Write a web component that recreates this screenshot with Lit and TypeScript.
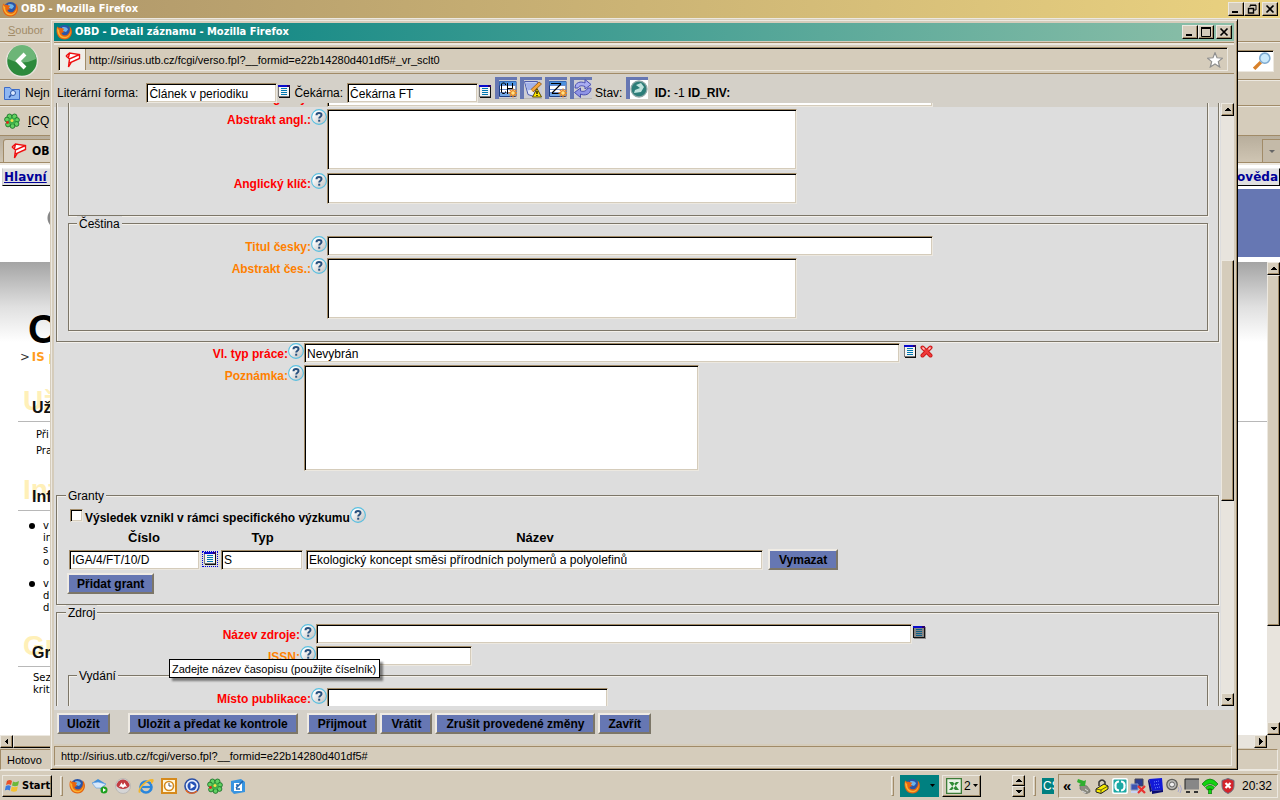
import { LitElement, html, css, svg, nothing } from "lit";
import { customElement } from "lit/decorators.js";

const firefox = svg`
  <circle cx="8.5" cy="8" r="7" fill="#2a55a8"/>
  <path d="M6 3.5C8 2.5 11 3 12 5.5L10 8 7 7Z" fill="#6db3ea"/>
  <path d="M1.2 2.5C0 6 .3 10 2.5 12.8 6 17 13 16.300 15.300 11 16.500 8 16 4.500 13.500 2.300 14.300 5 14 8.500 11.500 10.500 9 12.300 6 11 5.500 9L8.300 8 7 6.800C7 5.800 8 5.600 8.200 4.800 6.500 4.800 5.500 4 4.500 3.800 3.500 3.800 2.300 3.800 1.200 2.500Z" fill="#e8650f"/>
  <path d="M1.200 2.500C1 5 2.300 5 3.200 6 3 9 4.500 12.500 8.500 12.800 12 13 14.500 10 14.500 6 15.500 11 12 14.500 8 14.300 4 14 .5 10 1.200 2.500Z" fill="#f9b233"/>`;
const verso = svg`
  <path d="M3.500 2 7.500.8 14.500 3.500 14 7 6.500 10.500 3 15.500 3.800 10.500Z" fill="#fff"/>
  <path d="M1 4 4.500 1 14.500 2.500 14.500 6.500 6.500 10 3.500 15 4 10.500M4.500 1 3.500 5.500M1 4 4.500 7 14.500 2.500M4.500 7 4 10.500H6.500" fill="none" stroke="#ee1010" stroke-width="1.400"/>`;
const clover = svg`
  <g fill="#62d162" stroke="#0f6b20" stroke-width=".8"><circle cx="5.500" cy="3.500" r="2.500"/><circle cx="10.500" cy="3.500" r="2.500"/><circle cx="13" cy="7" r="2.400"/><circle cx="12.500" cy="11" r="2.400"/><circle cx="8.500" cy="13" r="2.400"/><circle cx="4" cy="11.500" r="2.400"/><circle cx="3" cy="6.500" r="2.400"/></g>
  <circle cx="8" cy="8" r="3.600" fill="#3fae49"/><circle cx="8" cy="7.500" r="1.500" fill="#f6e04a"/><circle cx="3.500" cy="9.500" r="1.400" fill="#e02a1a"/>`;
const list = svg`
  <path d="M0 0H12V13H1V12H0Z" fill="#111"/><path d="M0 2H11V12H0Z" fill="#777"/><path d="M1 2H11V11H1Z" fill="#f4f4f4"/>
  <path d="M0 0H12V2H0Z" fill="#0a0acc"/><path d="M9 0H12V2H9Z" fill="#2a006a"/>
  <path d="M3 3.500H9M3 5.500H9M3 7.500H9M3 9.500H9" stroke="#0078b0"/>`;
const listDark = svg`
  <path d="M1 1H13V13H1Z" fill="#909090"/><path d="M0 0H12V12H0Z" fill="#111"/><path d="M1 2H11V11H1Z" fill="#858585"/>
  <path d="M0 0H12V2H0Z" fill="#0a0acc"/><path d="M9 0H12V2H9Z" fill="#2a006a"/>
  <path d="M3 3.500H9M3 5.500H9M3 7.500H9M3 9.500H9" stroke="#0a5f88"/>`;
const help = svg`
  <defs><linearGradient id="ball" x1="0" y1="0" x2="1" y2="1"><stop offset=".2" stop-color="#fff"/><stop offset="1" stop-color="#bcbcbc"/></linearGradient></defs>
  <circle cx="8" cy="8" r="7.400" fill="url(#ball)" stroke="#58bfe0" stroke-width="1.100"/>
  <path d="M5.500 6.200C5.500 3.200 10.500 3.200 10.500 6 10.500 7.800 8.200 7.600 8.200 9.600" fill="none" stroke="#27507e" stroke-width="2"/><rect x="7.200" y="10.700" width="2" height="2" fill="#27507e"/>`;
const sun = svg`<path d="M18 11.500V20.500M13.500 16H22.500M14.800 12.800 21.200 19.200M21.200 12.800 14.800 19.200" stroke="#f08a20" stroke-width="1.300"/><circle cx="18" cy="16" r="2.300" fill="#ffe08a" stroke="#e88010"/>`;
const gridBase = svg`<path d="M4.500 4.500H21V19.500H4.500Z" fill="#fff" stroke="#1c3f86"/><path d="M4.500 4.500H21V8.500H4.500Z" fill="#4d92e0"/><path d="M5 15.500H21V19H5Z" fill="#76a9e6"/><path d="M5 8.500H21M5 12.500H21M5 15.500H21" stroke="#6c8ccc"/>`;

const tools = {
  ch: svg`${gridBase}<path d="M10.500 8V7L9.500 6H7.500L6.500 7V15L7.500 16.500H9.500L10.500 15.500V14.500M12.500 6V17M17.500 6V12M12.500 11.500H17.500" stroke="#000" fill="none"/>${sun}`,
  edit: svg`<path d="M4.500 4.500H17.500L14 19.500 8 17.500Z" fill="#dfe6fb" stroke="#4c5bac"/><path d="M5.500 5.500H17L15 12 7.500 13.500Z" fill="#a3b2ea"/><path d="M6 6 9 17 8 13Z" fill="#fff"/><path d="M11 12.500 19 5 21.500 7 13 15Z" fill="#f5a53a" stroke="#8f5310" stroke-width=".8"/><path d="M11 12.500 10 15.500 13 15Z" fill="#fff0c0"/><path d="M17 11.500 21.500 20H12.500Z" fill="#ffe800" stroke="#5a4b00"/><path d="M17 14V17M17 18V19" stroke="#000" stroke-width="1.300"/>`,
  z: svg`${gridBase}<path d="M6.500 7V6.500H15.500V7.500L7.500 15.500V16.500H15" stroke="#000" stroke-width="1.200" fill="none"/>${sun}`,
  swap: svg`<path d="M5 11C5 5 11 4 15 6V2.500L21 7.500 15 12V9.500C11 8 9 9 8 11Z" fill="#a9adf2" stroke="#4a4fae"/><path d="M21 11C21 18 14 19 10.500 17V20.500L4.500 15.500 10.500 11V14C14 15 16 14 18 11Z" fill="#8f94e6" stroke="#4a4fae"/>`,
  globe: svg`<path d="M4 3H22V22H4Z" fill="#fff"/><circle cx="13" cy="12" r="8" fill="#2c7d78" stroke="#8fa7a5" stroke-width="1.300"/><path d="M10 8 15 6 18 10 15 15 8 16 9 13 14 11Z" fill="#bfe3dd"/>`,
};

const quick = [
  firefox,
  svg`<path d="M0 5 6 1 14 6 9 11Z" fill="#3e8fdc"/><path d="M0 5 4 10H9L14 6 6 4Z" fill="#d8e8fa" stroke="#5c9add" stroke-width=".6"/><circle cx="12" cy="12" r="3.500" fill="#1ea01e"/><path d="M11 10 14 12 11 14Z" fill="#fff"/>`,
  svg`<circle cx="8" cy="8" r="7.500" fill="#d5d5d5" stroke="#aaa" stroke-width=".6"/><path d="M1.500 8A6.500 6.500 0 0 1 14.500 8Q12 11 8 11 4 11 1.500 8Z" fill="#c23a40"/><path d="M4 9 6.500 4.500 8 7 9.500 4.500 12 9 10 8.500 8 10 6 8.500Z" fill="#fff"/>`,
  svg`<circle cx="8" cy="9" r="5.500" fill="none" stroke="#2a86dc" stroke-width="2.600"/><path d="M3 9H13" stroke="#2a86dc" stroke-width="2.200"/><path d="M1 15C-2 10 9 0 15 1 17 3 14 6 13 6 14 3 12 2 8 5 3 9 1 13 3 14Z" fill="#f2b62c"/>`,
  svg`<path d="M1 1H15V15H1Z" fill="#fff5d8" stroke="#d68a1c" stroke-width="2"/><circle cx="8" cy="8" r="4.500" fill="#fff" stroke="#d68a1c" stroke-width="1.600"/><path d="M8 5V8H10.500" fill="none" stroke="#555"/>`,
  svg`<circle cx="8" cy="8" r="7" fill="#e7eefb" stroke="#2b4fa5" stroke-width="1.600"/><circle cx="8" cy="8" r="4.500" fill="#2451b7"/><path d="M6.500 5 11 8 6.500 11Z" fill="#fff"/><path d="M2 12C4 16 10 16 13 13" stroke="#e6641e" stroke-width="1.500" fill="none"/>`,
  clover,
  svg`<path d="M1 3 11 1 15 4V14L4 16 1 13Z" fill="#3894e0"/><path d="M4 5H12V13H4Z" fill="#fff"/><path d="M6 10 13 3M6 7H8M6 11H10" stroke="#1c64b0" stroke-width="1.600"/>`,
];

const tray = [
  svg`<path d="M4 6 11 8 14 12V14L10 16 4 11Z" fill="#8c8c80" stroke="#666" stroke-width=".6"/><path d="M6 13 10 15M9 11 12 13" stroke="#ddd"/><path d="M2 1 8 3 10 2 9 8 3 8 5 6 1 4Z" fill="#2fae2f"/>`,
  svg`<path d="M5 8V4Q8 0 11 4V7" fill="none" stroke="#333" stroke-width="1.500"/><path d="M2 11 10 6 14 8V11L7 15.500 2 14Z" fill="#f7ea00" stroke="#222"/><path d="M2 11 7 12 14 8M7 12V15" fill="none" stroke="#222" stroke-width=".7"/>`,
  svg`<rect x="0" y="0" width="16" height="16" rx="2" fill="#fff"/><rect x="1.500" y="1.500" width="13" height="13" rx="1" fill="#1ba8a4"/><path d="M7 3.500Q3 4 3.500 8 3 12 7 12.500M9 3.500Q13 4 12.500 8 13 12 9 12.500" fill="none" stroke="#fff" stroke-width="2.200"/>`,
  svg`<path d="M5 1H13V8H5Z" fill="#2a3c90" stroke="#445"/><path d="M1 6H8V12H1Z" fill="#3d55b0" stroke="#8899cc"/><path d="M1 14H8" stroke="#c8d4f4" stroke-width="2"/><path d="M8 8 15 15M15 8 8 15" stroke="#e8302f" stroke-width="2.200"/>`,
  svg`<path d="M1 1 14 0 15 12 4 13Z" fill="#1219d8"/><path d="M1 1 4 13 2 14 0 3ZM4 13 15 12V14L4 16Z" fill="#0a0c70"/><path d="M6 4 11 3M6 7 12 6M7 10 12 9" stroke="#6c88ff" stroke-dasharray="1 1"/>`,
  svg`<circle cx="6" cy="6.500" r="5.200" fill="#b8b8b4" stroke="#5c5c58" stroke-width="1.300"/><circle cx="6" cy="6.500" r="2.500" fill="#eee" stroke="#666"/><path d="M12 9Q14 11 12 14M14 7Q17 11 14 15" stroke="#a9a9cf" fill="none"/>`,
  svg`<path d="M1 1H15V11.500H1Z" fill="#878787"/><path d="M1 11.500V1H15" fill="none" stroke="#222"/><path d="M2 14H6M10 14H14" stroke="#333" stroke-width="2"/>`,
  svg`<path d="M0 6Q8 -4 16 6L13.500 8.500Q8 3 2.500 8.500ZM3.500 9.500Q8 5 12.500 9.500L10.500 12Q8 10 5.500 12ZM6.500 11H9.500V16H6.500Z" fill="#12d412" stroke="#085c08" stroke-width=".6"/>`,
  svg`<path d="M8 .5 14 2.500V8Q14 13 8 15.500 2 13 2 8V2.500Z" fill="#d4232a" stroke="#6b7180"/><path d="M5.500 5 10.500 10M10.500 5 5.500 10" stroke="#fff" stroke-width="2.200"/>`,
];

const pic = (content: unknown, w = 16, h = 16, box = `0 0 ${w} ${h}`) =>
  html`<svg width=${w} height=${h} viewBox=${box} aria-hidden="true">${content}</svg>`;

@customElement("app-root")
export class AppRoot extends LitElement {
  static styles = css`
    :host {
      --face: #d5ccbb; --dark: #a18b68; --light: #ece8e0;
      --page: #dddddd; --bar: #d4d0c8; --blue: #6677b3;
      display: block; font: 12px/20px "Liberation Sans", Arial, sans-serif; color: #000;
    }
    * { box-sizing: border-box; }
    svg { display: block; flex: none; }
    button, input, textarea { font: inherit; color: inherit; margin: 0; border-radius: 0; }
    .desktop { position: relative; height: 100vh; display: flex; flex-direction: column; background: var(--face); overflow: hidden; }
    .grow { flex: 1; min-width: 0; }

    .title { display: flex; align-items: center; gap: 3px; height: 18px; padding: 0 2px; font: bold 11px/18px "DejaVu Sans Condensed", "DejaVu Sans", sans-serif; color: #fff; white-space: nowrap; }
    .title .grow { overflow: hidden; }
    .back-title { background: linear-gradient(90deg, #ae966a, #ead280); }
    .front-title { background: linear-gradient(90deg, #008080, #8cbfa8); }
    .caps { display: flex; }
    .caps button:last-child { margin-left: 2px; }
    .cap, .sb, .raised { background: var(--face); border: 1px solid; border-color: var(--light) #000 #000 var(--light); box-shadow: inset -1px -1px var(--dark); padding: 0; }
    .cap { width: 16px; height: 14px; display: grid; place-items: center; }

    .strip { display: flex; align-items: center; border-top: 1px solid var(--light); border-bottom: 1px solid var(--dark); white-space: nowrap; font-size: 12px; overflow: hidden; }
    .menu { height: 24px; padding: 0 8px; font-size: 11px; color: #a18b68; }
    .menu a, .marks a { color: inherit; text-decoration: none; }
    .nav { height: 38px; justify-content: space-between; padding: 0 6px 0 5px; }
    .back-btn { width: 34px; height: 34px; padding: 0; border: 0; background: none; }
    .search { width: 90px; height: 22px; background: #fff; display: flex; align-items: center; justify-content: flex-end; padding-right: 2px; border: 1px solid; border-color: var(--dark) var(--light) var(--light) var(--dark); box-shadow: inset 0 1px #000; }
    .marks { height: 26px; padding: 0 4px; }
    .marks.tall { height: 30px; }
    .marks a { display: flex; align-items: center; gap: 5px; }
    .marks.tall a { gap: 8px; }
    .tabs { display: flex; justify-content: space-between; align-items: flex-end; height: 27px; background: linear-gradient(#b8ae9c, #cfc5b3); border-bottom: 1px solid var(--dark); }
    .tab { height: 23px; padding: 0 7px; display: flex; gap: 5px; align-items: center; background: #dcd4c6; border: 1px solid var(--dark); border-bottom: 0; border-radius: 3px 0 0 0; margin-left: 3px; font: bold 12px "DejaVu Sans Condensed", sans-serif; }
    .alltabs { width: 18px; height: 23px; padding: 0; border: 1px solid var(--dark); border-width: 1px 0 0 1px; background: #c4baa8; display: grid; place-items: center; }

    .site { flex: 1; min-height: 0; display: flex; flex-direction: column; background: #fff; overflow: hidden; border-top: 2px solid var(--light); }
    .site-top { display: flex; justify-content: space-between; padding: 3px 0 0 2px; height: 24px; }
    .site-top a { height: 18px; font: bold 12px/17px "DejaVu Sans", sans-serif; color: #000099; text-decoration: underline; background: #e0e0e0; border: 1px solid; border-color: #eee #000 #000 #ccc; padding: 0 1px; }
    .site-top a:first-child { padding-right: 4px; }
    .site-top a:last-child { text-decoration: none; }
    .banner { height: 68px; background: radial-gradient(circle at 58px 11px, #888 10px, transparent 11px) 0 18px / 60px 22px no-repeat, linear-gradient(90deg, transparent 50%, #6677b3 50%); margin-bottom: 5px; }
    .frame { flex: 1; min-height: 0; display: flex; }
    .article { flex: 1; overflow: hidden; background: linear-gradient(#a4a4a4, #e0e0e0 45px, #fff 80px) no-repeat; padding-top: 44px; font: 10px/16px "DejaVu Sans", sans-serif; white-space: nowrap; }
    .article h1 { margin: 0 0 0 28px; font: bold 40px/46px "Liberation Sans", sans-serif; }
    .crumb { margin: -5px 0 0 20px; padding: 0 0 18px; display: flex; gap: 2px; font: bold 13px/19px "DejaVu Sans Condensed", sans-serif; color: #ff9c1c; }
    .crumb span { color: #333; font-weight: normal; }
    .article h2 { margin: 0 0 0 18px; padding-left: 14px; height: 38px; border-bottom: 1px solid #b8b8b8; font: bold 16px/48px "Liberation Sans", sans-serif; color: #111; position: relative; }
    .article h2 ~ h2 { width: 50%; }
    .article h2::before { content: attr(data-echo); position: absolute; left: 5px; top: 4px; font: bold 28px/26px "Liberation Sans", sans-serif; color: #fff0b8; }
    .article h2 b { position: relative; }
    .article p { margin: 5px 0 14px 36px; }
    .article ul { padding: 0; margin: 9px 0 15px 43px; line-height: 12px; list-style: none; }
    .article li { margin-bottom: 10px; position: relative; }
    .article li::before { content: ""; position: absolute; left: -14px; top: 3px; width: 6px; height: 6px; border-radius: 50%; background: #000; }
    .article p.tight { line-height: 12px; margin-left: 33px; }

    .vbar { width: 13px; display: flex; flex-direction: column; background: #e8e4dd; }
    .hbar { height: 13px; display: flex; background: #e8e4dd; margin-right: 13px; }
    .sb { width: 13px; height: 13px; display: grid; place-items: center; flex: none; }
    .thumb { min-height: 8px; }
    .back-status { height: 21px; margin: 1px 2px 0 0; border: 1px solid; border-color: var(--dark) var(--light) var(--light) var(--dark); padding-left: 6px; font-size: 11px; }

    .front { position: absolute; left: 50px; top: 19px; right: 42px; bottom: 30px; display: flex; flex-direction: column; padding: 3px; background: var(--face); border: 1px solid; border-color: var(--face) #000 #000 var(--face); box-shadow: inset 1px 1px var(--light), inset -1px -1px var(--dark); }
    .rule { height: 3px; border-top: 1px solid var(--dark); background: var(--light); margin-top: 1px; }
    .address { display: flex; align-items: center; height: 24px; margin: 2px 6px 2px 4px; border: 1px solid; border-color: var(--dark) var(--light) var(--light) var(--dark); box-shadow: inset 1px 1px #000; padding: 1px 4px 0 1px; font-size: 11px; }
    .site-id { width: 26px; height: 21px; display: grid; place-items: center; background: #f1eee9; border-right: 1px solid var(--dark); margin-right: 3px; }
    .address input { flex: 1; border: 0; background: none; padding: 0; outline: 0; height: 20px; }
    .client { flex: 1; min-height: 0; display: flex; flex-direction: column; border-top: 1px solid var(--dark); background: var(--bar); }
    .head { display: flex; align-items: flex-end; height: 29px; padding-left: 3px; white-space: nowrap; }
    .head input { width: 131px; margin-left: 4px; }
    .head .lead { margin-left: 8px; }
    .head .ic { margin: 0 3px 5px 1px; }
    .head .tool { margin: 0 3px 4px 0; }
    .head .ids { margin-left: 4px; }
    .tool { width: 22px; height: 22px; padding: 0; border: 0; background: #cdcdd4; box-shadow: inset 4px 3px var(--blue), inset 0 -1px #b8b6b2; overflow: hidden; }
    .ic { padding: 0; border: 0; background: none; flex: none; }
    .fld { height: 20px; padding: 1px 2px 0; background: #fff; border: 1px solid; border-color: var(--dark) var(--light) var(--light) var(--dark); box-shadow: inset 1px 1px #000, inset -1px -1px var(--face); outline: 0; resize: none; display: block; line-height: 16px; }
    textarea.fld { margin-bottom: 1px; }
    .w-long { width: 606px; } .w-mid { width: 596px; } .w-area { width: 470px; } .w-note { width: 395px; } .w-issn { width: 156px; } .w-place { width: 281px; }
    .h61 { height: 61px; } .h31 { height: 31px; } .h106 { height: 106px; }

    .scroller { flex: 1; min-height: 0; display: flex; background: linear-gradient(var(--bar) 4px, var(--page) 4px); }
    .view { flex: 1; min-width: 0; overflow: hidden; padding: 0 2px; }
    form { margin-top: -16px; }
    fieldset { margin: 0; min-width: 0; border: 1px solid #7c7668; box-shadow: inset 1px 1px #f3f0ea, 1px 1px #f3f0ea; padding: 4px 10px 10px 11px; }
    fieldset fieldset { padding: 5px 10px 10px; }
    fieldset.open { border-top: 0; padding-top: 0; }
    legend { height: 15px; line-height: 17px; padding: 0 2px; margin-left: -2px; background: var(--page); }
    .line { display: flex; align-items: flex-start; margin-bottom: 2px; position: relative; }
    .line:last-child { margin-bottom: 0; }
    .line label { width: 232px; flex: none; text-align: right; font-weight: bold; line-height: 22px; height: 20px; color: #ff0000; }
    .line label.opt { color: #ff8000; }
    .line .ic { height: 16px; }
    .line .after { height: 13px; margin: 2px 0 0 1px; }
    .line .gap { height: 13px; margin: 2px 0 0 4px; }
    .line .near { margin-left: 3px; }
    .loose { margin-top: 1px; margin-bottom: 16px; }
    .check { display: flex; align-items: center; height: 16px; font-weight: bold; padding-left: 2px; }
    .check input { appearance: none; width: 13px; height: 13px; background: #fff; border: 1px solid; border-color: var(--dark) var(--light) var(--light) var(--dark); box-shadow: inset 1px 1px #000, inset -1px -1px var(--face); }
    .check label { margin: 5px 0 0 2px; }
    table { border-collapse: collapse; }
    th { height: 26px; padding: 4px 0 0; font-size: 13px; line-height: 16px; }
    td { padding: 0 2px 0 1px; }
    .pair { display: flex; gap: 2px; }
    .w-no { width: 131px; } .w-type { width: 82px; } .w-name { width: 457px; }
    .focus { width: 16px; height: 16px; margin-top: 1px; padding: 1px 2px; outline: 1px dotted #0000dd; outline-offset: -1px; display: flex; align-items: flex-start; }
    .btn { height: 21px; padding: 0 8px; background: var(--blue); font-weight: bold; line-height: 16px; border: 2px solid; border-color: #efebe4 #7c7668 #7c7668 #efebe4; white-space: nowrap; }
    .roomy { padding: 0 9px; }
    .del { margin-left: 2px; display: block; }
    .add { display: block; margin: 3px 0 0 -1px; }
    .tip { position: absolute; z-index: 2; left: 101px; top: 35px; height: 19px; line-height: 18px; padding: 0 3px 0 2px; font-size: 11px; background: #fff; border: 1px solid #000; box-shadow: 3px 3px 2px rgba(0, 0, 0, .45); white-space: nowrap; }
    .foot { flex: none; height: 38px; border-top: 4px solid var(--page); padding: 3px 3px 0; display: flex; align-items: flex-start; gap: 3px; }
    .foot .wide { margin: 0 6px 0 15px; }
    .status { height: 20px; margin: 2px 2px 0 0; border: 1px solid; border-color: var(--dark) var(--light) var(--light) var(--dark); padding-left: 6px; font-size: 11px; line-height: 18px; }

    .task { flex: none; height: 30px; display: flex; align-items: center; border-top: 1px solid var(--light); padding: 0 2px; }
    .start { width: 50px; height: 22px; display: flex; align-items: center; gap: 2px; padding: 0 1px; font: bold 11px/18px "DejaVu Sans Condensed", sans-serif; }
    .grip { width: 3px; height: 20px; border: 1px solid; border-color: var(--light) var(--dark) var(--dark) var(--light); margin: 0 6px 0 8px; }
    .quick { display: flex; gap: 7px; }
    .grp { width: 39px; height: 22px; display: flex; align-items: center; padding: 0 4px; gap: 3px; margin-right: 3px; border: 0; }
    .grp.on { background: #008080; justify-content: space-between; }
    .grp.raised { border: 1px solid; border-color: var(--light) #000 #000 var(--light); padding: 0 3px; gap: 2px; }
    .spin { width: 13px; margin: 0 0 0 28px; }
    .spin .sb { height: 11px; }
    .lang { width: 12px; height: 16px; background: #008080; color: #fff; font-size: 12px; line-height: 16px; overflow: hidden; padding-left: 1px; }
    .tray { display: flex; align-items: center; gap: 2px; height: 24px; margin-left: 4px; border: 1px solid; border-color: var(--dark) var(--light) var(--light) var(--dark); padding: 0 5px 0 4px; }
    .tray .more { font-size: 15px; font-weight: bold; width: 11px; line-height: 16px; }
    .tray time { margin-left: 4px; }
  `;

  private arrow(d: "u" | "d" | "l" | "r") {
    const p = { u: "M1 5H8L4.500 1.500Z", d: "M1 2H8L4.500 5.500Z", l: "M6 0V7L2.500 3.500Z", r: "M3 0V7L6.500 3.500Z" }[d];
    return pic(svg`<path d=${p} shape-rendering="crispEdges"/>`, 9, 7);
  }

  private sb(d: "u" | "d" | "l" | "r") {
    return html`<button class="sb" type="button" tabindex="-1">${this.arrow(d)}</button>`;
  }

  private vbar(before: number, thumb: number, after: number) {
    return html`<div class="vbar">${this.sb("u")}
      <div style="flex:${before}"></div><div class="raised thumb" style="flex:${thumb}"></div><div style="flex:${after}"></div>
      ${this.sb("d")}</div>`;
  }

  private caps(restore: boolean) {
    return html`<div class="caps">
      <button class="cap" aria-label="Minimalizovat">${pic(svg`<path d="M1 7H7V9H1Z"/>`, 10, 10)}</button>
      <button class="cap" aria-label="Maximalizovat">${pic(restore
        ? svg`<path d="M3 1H9V6H7M3 3V1.500H9" fill="none" stroke="#000"/><path d="M1.500 4.500H6.500V9H1.500ZM1 4.500H7" fill="none" stroke="#000" stroke-width="1.400"/>`
        : svg`<path d="M.5 .5H9.500V9.500H.5Z" fill="none" stroke="#000"/><path d="M0 0H10V2H0Z"/>`, 10, 10)}</button>
      <button class="cap" aria-label="Zavřít okno">${pic(svg`<path d="M1.500 1.500 8.500 8.500M8.500 1.500 1.500 8.500" stroke="#000" stroke-width="1.700"/>`, 10, 10)}</button>
    </div>`;
  }

  private line(id: string, label: string, opt: boolean, control: unknown, extra: unknown = nothing) {
    return html`<div class="line"><label class=${opt ? "opt" : ""} for=${id}>${label}</label>
      <button class="ic" type="button" aria-label="Nápověda">${pic(help)}</button>${control}${extra}</div>`;
  }

  private backWindow() {
    return html`
      <div class="title back-title">${pic(firefox)}<span class="grow">OBD - Mozilla Firefox</span>${this.caps(true)}</div>
      <nav class="strip menu"><a href="#"><u>S</u>oubor</a></nav>
      <div class="strip nav">
        <button class="back-btn" aria-label="Zpět">${pic(svg`<circle cx="17" cy="17" r="15.500" fill="#2d8a3c" stroke="#e6e2da" stroke-width="1.500"/><path d="M3 15A14 14 0 0 1 31 15Q17 22 3 15Z" fill="#6cb577"/><path d="M20 10 13 17 20 24" fill="none" stroke="#fff" stroke-width="4"/>`, 34, 34)}</button>
        <div class="search">${pic(svg`<path d="M1 15 7 9" stroke="#d8812a" stroke-width="3"/><circle cx="10.500" cy="5.500" r="4.500" fill="#cbeafc" stroke="#7da9cf" stroke-width="1.400"/>`, 18, 18, "0 0 16 16")}</div>
      </div>
      <div class="strip marks"><a href="#">${pic(svg`<path d="M.5 2.500H6L7.500 4.500H15.500V14.500H.5Z" fill="#8fb7f2" stroke="#3d6cc8"/><circle cx="9" cy="8" r="2.500" fill="#dbe9ff" stroke="#2c55a8"/><path d="M7 10 5 12.500" stroke="#2c55a8" stroke-width="1.500"/>`)}Nejná</a></div>
      <div class="strip marks tall"><a href="#">${pic(clover)}<span><u>I</u>CQ</span></a></div>
      <div class="tabs"><div class="tab">${pic(verso)}OB</div><button class="alltabs" aria-label="Panely">${pic(svg`<path d="M0 0H6L3 3Z" fill="#666"/>`, 6, 3)}</button></div>
      <div class="site">
        <div class="site-top"><a href="#">Hlavní</a><a href="#">ověda</a></div>
        <div class="banner"></div>
        <div class="frame">
          <div class="article">
            <h1>O</h1>
            <div class="crumb"><span>&gt;</span>IS p</div>
            <h2 data-echo="Už"><b>Už</b></h2>
            <p>Při<br>Pra</p>
            <h2 data-echo="Inf"><b>Inf</b></h2>
            <ul><li>v<br>in<br>s<br>o</li><li>v<br>d<br>d</li></ul>
            <h2 data-echo="Gr"><b>Gr</b></h2>
            <p class="tight">Sez<br>krit</p>
          </div>
          ${this.vbar(0, 351, 96)}
        </div>
      </div>
      <div class="hbar">${this.sb("l")}<div class="raised" style="flex:7"></div><div style="flex:1"></div>${this.sb("r")}</div>
      <div class="back-status">Hotovo</div>`;
  }

  private form() {
    return html`<form>
      <fieldset class="open">
        <fieldset class="open">
          ${this.line("ta", "Titul anglický:", false, html`<input id="ta" class="fld w-long">`)}
          ${this.line("aa", "Abstrakt angl.:", false, html`<textarea id="aa" class="fld w-area h61"></textarea>`)}
          ${this.line("ak", "Anglický klíč:", false, html`<textarea id="ak" class="fld w-area h31"></textarea>`)}
        </fieldset>
        <fieldset>
          <legend>Čeština</legend>
          ${this.line("tc", "Titul česky:", true, html`<input id="tc" class="fld w-long">`)}
          ${this.line("ac", "Abstrakt čes.:", true, html`<textarea id="ac" class="fld w-area h61"></textarea>`)}
        </fieldset>
      </fieldset>
      <div class="loose">
        ${this.line("vt", "Vl. typ práce:", false, html`<input id="vt" class="fld w-mid" value="Nevybrán">`, html`
          <button class="ic gap" type="button" aria-label="Číselník">${pic(list, 13, 13)}</button>
          <button class="ic gap near" type="button" aria-label="Smazat">${pic(svg`<path d="M2.500 2.500 10.500 10.500M10.500 2.500 2.500 10.500" stroke="#c81818" stroke-width="4" stroke-linecap="round"/><path d="M2.500 2.500 10.500 10.500M10.500 2.500 2.500 10.500" stroke="#f03a3a" stroke-width="2.400" stroke-linecap="round"/><path d="M2.500 2.500 4.500 4.500M10.500 2.500 8.500 4.500" stroke="#ffc4c4" stroke-width="1.600"/>`, 13, 13)}</button>`)}
        ${this.line("po", "Poznámka:", true, html`<textarea id="po" class="fld w-note h106"></textarea>`)}
      </div>
      <fieldset>
        <legend>Granty</legend>
        <div class="check"><input type="checkbox" id="sv"><label for="sv">Výsledek vznikl v rámci specifického výzkumu</label>
          <button class="ic" type="button" aria-label="Nápověda">${pic(help)}</button></div>
        <table>
          <tr><th>Číslo</th><th>Typ</th><th>Název</th><th></th></tr>
          <tr>
            <td><div class="pair"><input class="fld w-no" aria-label="Číslo" value="IGA/4/FT/10/D"><button class="ic focus" type="button" aria-label="Číselník">${pic(list, 13, 13)}</button></div></td>
            <td><input class="fld w-type" aria-label="Typ" value="S"></td>
            <td><input class="fld w-name" aria-label="Název" value="Ekologický koncept směsi přírodních polymerů a polyolefinů"></td>
            <td><button class="btn roomy del" type="button">Vymazat</button></td>
          </tr>
        </table>
        <button class="btn add" type="button">Přidat grant</button>
      </fieldset>
      <fieldset>
        <legend>Zdroj</legend>
        ${this.line("nz", "Název zdroje:", false, html`<input id="nz" class="fld w-mid">`, html`
          <button class="ic after" type="button" aria-label="Číselník">${pic(listDark, 13, 13)}</button>
          <div class="tip" role="tooltip">Zadejte název časopisu (použijte číselník)</div>`)}
        ${this.line("is", "ISSN:", true, html`<input id="is" class="fld w-issn">`)}
        <fieldset style=${nothing}>
          <legend>Vydání</legend>
          ${this.line("mp", "Místo publikace:", false, html`<input id="mp" class="fld w-place">`)}
        </fieldset>
      </fieldset>
    </form>`;
  }

  private frontWindow() {
    return html`<section class="front">
      <div class="title front-title">${pic(firefox)}<span class="grow">OBD - Detail záznamu - Mozilla Firefox</span>${this.caps(false)}</div>
      <div class="rule"></div>
      <div class="address"><span class="site-id">${pic(verso)}</span>
        <input aria-label="Adresa" value="http://sirius.utb.cz/fcgi/verso.fpl?__formid=e22b14280d401df5#_vr_sclt0">
        ${pic(svg`<path d="M8 .8 10 5.800 15.500 6.200 11.300 9.600 12.700 15 8 12 3.300 15 4.700 9.600.5 6.200 6 5.800Z" fill="#fff" stroke="#8f8f8f" stroke-width="1.200"/>`)}</div>
      <div class="client">
        <div class="head">
          <label for="lf">Literární forma:</label><input id="lf" class="fld lead" value="Článek v periodiku">
          <button class="ic" aria-label="Číselník">${pic(list, 13, 13)}</button>
          <label for="ce">Čekárna:</label><input id="ce" class="fld" value="Čekárna FT">
          <button class="ic" aria-label="Číselník">${pic(list, 13, 13)}</button>
          <button class="tool" aria-label="CH">${pic(tools.ch, 22, 22)}</button>
          <button class="tool" aria-label="Upravit">${pic(tools.edit, 22, 22)}</button>
          <button class="tool" aria-label="Z">${pic(tools.z, 22, 22)}</button>
          <button class="tool" aria-label="Obnovit">${pic(tools.swap, 22, 22)}</button>
          <span>Stav:&nbsp;</span>
          <button class="tool" aria-label="Stav">${pic(tools.globe, 22, 22)}</button>
          <span class="ids"><b>ID:</b> -1 <b>ID_RIV:</b></span>
        </div>
        <div class="scroller"><div class="view">${this.form()}</div>${this.vbar(145, 240, 193)}</div>
        <div class="foot">
          <button class="btn">Uložit</button><button class="btn wide">Uložit a předat ke kontrole</button>
          <button class="btn roomy">Přijmout</button><button class="btn roomy">Vrátit</button>
          <button class="btn roomy">Zrušit provedené změny</button><button class="btn">Zavřít</button>
        </div>
      </div>
      <div class="status">http://sirius.utb.cz/fcgi/verso.fpl?__formid=e22b14280d401df5#</div>
    </section>`;
  }

  render() {
    return html`<div class="desktop">
      ${this.backWindow()}
      ${this.frontWindow()}
      <footer class="task">
        <button class="start raised">${pic(svg`<path d="M3 3Q6 1 8 3L7 7Q5 5.500 2 7Z" fill="#e8502a"/><path d="M9 3.500Q12 5 15 3L14 7.500Q11 9 8 7.500Z" fill="#6cb83a"/><path d="M1.800 8Q4.500 6.500 6.800 8L5.800 12.500Q3.500 11 .8 12.500Z" fill="#3a7ae0"/><path d="M7.800 8.500Q10.500 10 13.800 8.500L12.800 13Q10 14.500 6.800 13Z" fill="#f4c030"/>`)}Start</button>
        <span class="grip"></span>
        <div class="quick">${quick.map((p) => pic(p))}</div>
        <div class="grow"></div>
        <span class="grip"></span>
        <button class="grp on" aria-label="Firefox">${pic(firefox)}${pic(svg`<path d="M0 0H5L2.500 3Z"/>`, 5, 3)}</button>
        <button class="grp raised">${pic(svg`<path d="M.5.500H15.500V15.500H.5Z" fill="#e8f2e4" stroke="#3d7c38" stroke-width="1.600"/><path d="M3 4H7L13 12H9ZM13 4H10L3 12H6Z" fill="#2f8b35"/>`)}<span>2</span>${pic(svg`<path d="M0 0H5L2.500 3Z"/>`, 5, 3)}</button>
        <div class="spin">${this.sb("u")}${this.sb("d")}</div>
        <span class="grip"></span>
        <span class="lang">CS</span>
        <div class="tray"><span class="more">«</span>${tray.map((t) => pic(t))}<time>20:32</time></div>
      </footer>
    </div>`;
  }
}
